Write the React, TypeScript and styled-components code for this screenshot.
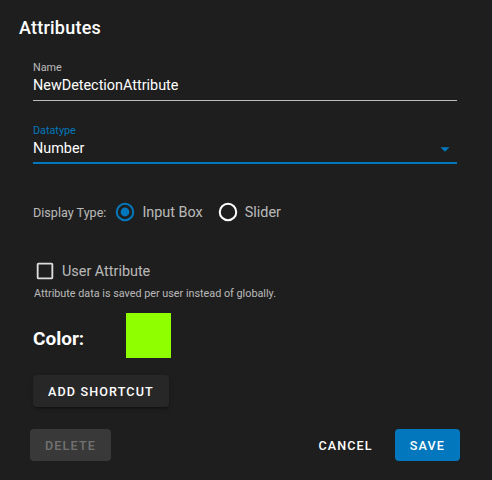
import React from "react";
import styled, { createGlobalStyle } from "styled-components";

const GlobalStyle = createGlobalStyle`
  html, body {
    margin: 0;
    padding: 0;
    background: #1e1e1e;
  }
`;

const BLUE = "#0277bd";

const App = () => {
  return (
    <>
      <GlobalStyle />
      <Card>
        <Title>Attributes</Title>
        <Body>
          <Field>
            <FieldLabel>Name</FieldLabel>
            <FieldValue>NewDetectionAttribute</FieldValue>
          </Field>
          <Field $active>
            <FieldLabel $active>Datatype</FieldLabel>
            <FieldValue>
              Number
              <MenuArrow viewBox="0 0 24 24">
                <path d="M7,10L12,15L17,10H7Z" fill={BLUE} />
              </MenuArrow>
            </FieldValue>
          </Field>

          <DisplayRow>
            <DisplayLabel>Display Type:</DisplayLabel>
            <RadioOption>
              <svg width="22" height="22" viewBox="0 0 24 24">
                <circle cx="12" cy="12" r="9" fill="none" stroke={BLUE} strokeWidth="2.2" />
                <circle cx="12" cy="12" r="4.8" fill={BLUE} />
              </svg>
              <OptionText>Input Box</OptionText>
            </RadioOption>
            <RadioOption>
              <svg width="22" height="22" viewBox="0 0 24 24">
                <circle cx="12" cy="12" r="9" fill="none" stroke="#ffffff" strokeWidth="2.2" />
              </svg>
              <OptionText>Slider</OptionText>
            </RadioOption>
          </DisplayRow>

          <CheckRow>
            <svg width="22" height="22" viewBox="0 0 24 24">
              <path
                d="M19,3H5C3.89,3 3,3.89 3,5V19A2,2 0 0,0 5,21H19A2,2 0 0,0 21,19V5C21,3.89 20.1,3 19,3M19,5V19H5V5H19Z"
                fill="rgba(255,255,255,0.85)"
              />
            </svg>
            <CheckText>User Attribute</CheckText>
          </CheckRow>
          <Hint>Attribute data is saved per user instead of globally.</Hint>

          <ColorRow>
            <ColorLabel>Color:</ColorLabel>
            <Swatch $color="#8fff00" />
          </ColorRow>

          <RaisedButton>Add Shortcut</RaisedButton>
        </Body>
        <Actions>
          <DisabledButton disabled>Delete</DisabledButton>
          <Spacer />
          <TextButton>Cancel</TextButton>
          <PrimaryButton>Save</PrimaryButton>
        </Actions>
      </Card>
    </>
  );
};

export default App;

const Card = styled.div`
  width: 492px;
  height: 480px;
  background: #1e1e1e;
  color: #ffffff;
  font-family: Roboto, "Liberation Sans", sans-serif;
  box-sizing: border-box;
  overflow: hidden;
`;

const Title = styled.div`
  padding: 12px 19px 0;
  font-size: 18px;
  font-weight: 500;
  line-height: 32px;
  letter-spacing: 0.0125em;
`;

const Body = styled.div`
  padding: 0 35px 0 33px;
  display: flex;
  flex-direction: column;
  align-items: flex-start;
`;

const Field = styled.div<{ $active?: boolean }>`
  align-self: stretch;
  margin-top: ${(p) => (p.$active ? "22px" : "16px")};
  padding-bottom: ${(p) => (p.$active ? "3px" : "4px")};
  border-bottom: ${(p) =>
    p.$active ? `2px solid ${BLUE}` : "1px solid rgba(255, 255, 255, 0.7)"};
`;

const FieldLabel = styled.div<{ $active?: boolean }>`
  font-size: 10.8px;
  line-height: 16px;
  color: ${(p) => (p.$active ? BLUE : "rgba(255, 255, 255, 0.7)")};
`;

const FieldValue = styled.div`
  position: relative;
  font-size: 14.4px;
  line-height: 20px;
  color: #ffffff;
`;

const MenuArrow = styled.svg`
  position: absolute;
  right: 1px;
  top: -1px;
  width: 22px;
  height: 22px;
`;

const DisplayRow = styled.div`
  display: flex;
  align-items: center;
  height: 24px;
  margin-top: 36px;
`;

const DisplayLabel = styled.span`
  font-size: 12.6px;
  color: rgba(255, 255, 255, 0.7);
  margin-right: 8px;
`;

const RadioOption = styled.div`
  display: flex;
  align-items: center;
  gap: 6px;
  margin-right: 14px;
`;

const OptionText = styled.span`
  font-size: 14.4px;
  color: rgba(255, 255, 255, 0.7);
`;

const CheckRow = styled.div`
  display: flex;
  align-items: center;
  gap: 6px;
  height: 24px;
  margin-top: 35px;
  margin-left: 1px;
`;

const CheckText = styled.span`
  font-size: 14.4px;
  color: rgba(255, 255, 255, 0.7);
`;

const Hint = styled.div`
  margin-top: 3px;
  margin-left: 1px;
  font-size: 10.8px;
  line-height: 16px;
  color: rgba(255, 255, 255, 0.7);
`;

const ColorRow = styled.div`
  display: flex;
  align-items: center;
  margin-top: 11px;
`;

const ColorLabel = styled.span`
  width: 93px;
  padding-top: 5px;
  font-size: 19px;
  font-weight: 700;
`;

const Swatch = styled.div<{ $color: string }>`
  width: 45px;
  height: 45px;
  background: ${(p) => p.$color};
`;

const BaseButton = styled.button`
  height: 32px;
  padding: 0 15px;
  border: none;
  border-radius: 4px;
  font-family: Roboto, "Liberation Sans", sans-serif;
  font-size: 12.6px;
  font-weight: 500;
  letter-spacing: 0.0892857143em;
  text-transform: uppercase;
  color: #ffffff;
  background: transparent;
  cursor: pointer;
`;

const RaisedButton = styled(BaseButton)`
  margin-top: 17px;
  background: #272727;
  box-shadow: 0 3px 1px -2px rgba(0, 0, 0, 0.2), 0 2px 2px 0 rgba(0, 0, 0, 0.14),
    0 1px 5px 0 rgba(0, 0, 0, 0.12);
`;

const Actions = styled.div`
  display: flex;
  align-items: center;
  gap: 7px;
  margin-top: 22px;
  padding: 0 32px 0 30px;
`;

const Spacer = styled.div`
  flex: 1;
`;

const DisabledButton = styled(BaseButton)`
  background: rgba(255, 255, 255, 0.12);
  color: rgba(255, 255, 255, 0.3);
  cursor: default;
`;

const TextButton = styled(BaseButton)``;

const PrimaryButton = styled(BaseButton)`
  background: ${BLUE};
`;
